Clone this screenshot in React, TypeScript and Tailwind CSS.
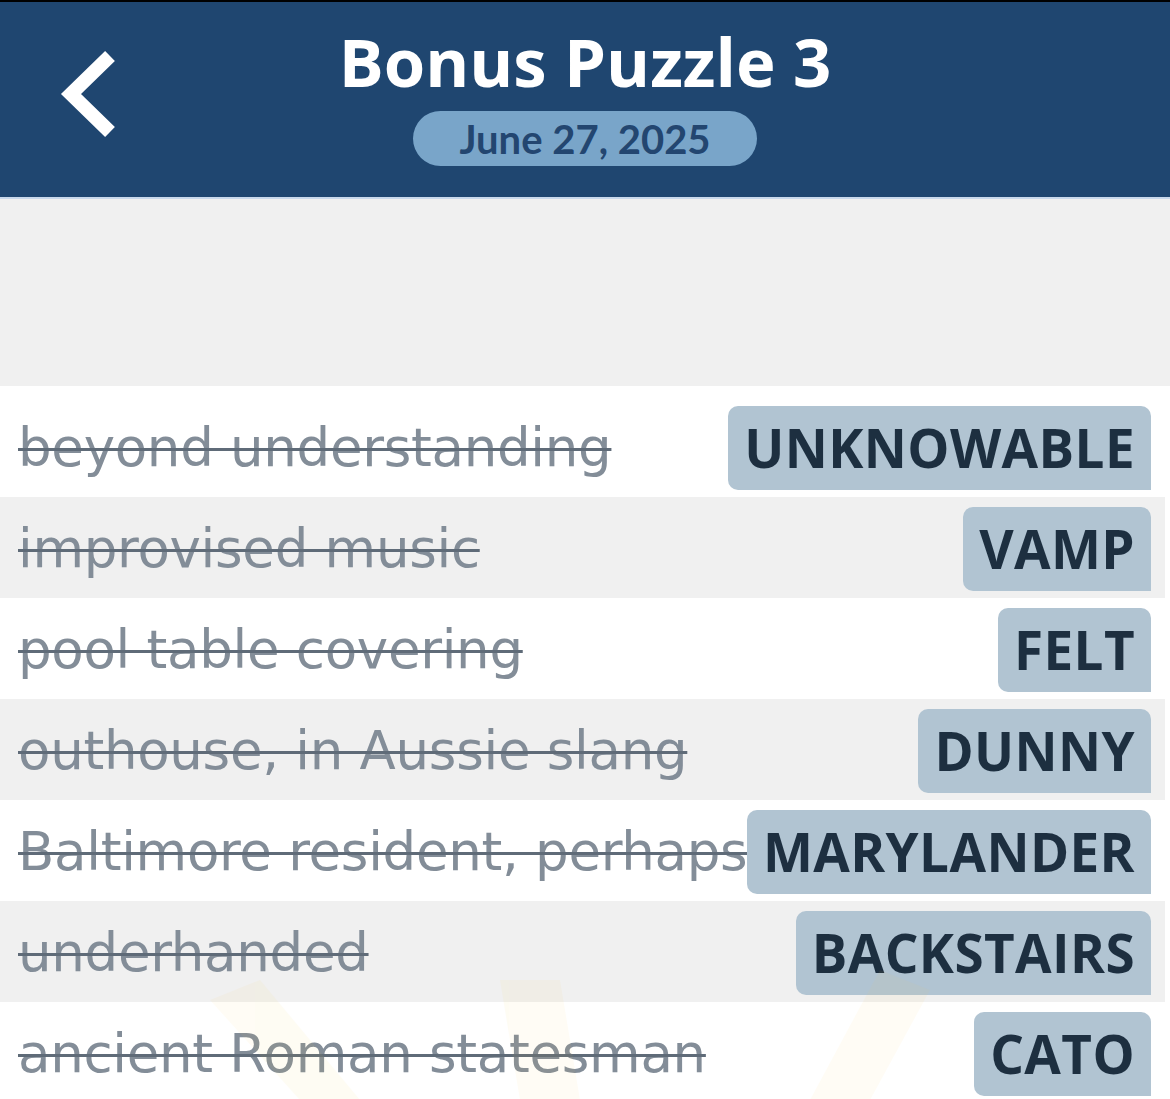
import React from "react";

interface ClueRowProps {
  clue: string;
  answer: string;
  shaded: boolean;
  first?: boolean;
}

const clues = [
  { clue: "beyond understanding", answer: "UNKNOWABLE" },
  { clue: "improvised music", answer: "VAMP" },
  { clue: "pool table covering", answer: "FELT" },
  { clue: "outhouse, in Aussie slang", answer: "DUNNY" },
  { clue: "Baltimore resident, perhaps", answer: "MARYLANDER" },
  { clue: "underhanded", answer: "BACKSTAIRS" },
  { clue: "ancient Roman statesman", answer: "CATO" },
];

function ClueRow({ clue, answer, shaded, first = false }: ClueRowProps) {
  return (
    <div
      className={`mr-[5px] flex items-center justify-between pl-[18px] pr-[14px] ${
        first ? "h-[111px] pt-[12px]" : "h-[101px] pt-[2px]"
      } ${shaded ? "bg-[#f0f0f0]" : "bg-white"}`}
    >
      <span className="min-w-0 whitespace-nowrap font-['DejaVu_Sans',sans-serif] text-[53px] leading-none tracking-[-0.3px] text-[#838d98] line-through decoration-[#5f6b78] decoration-[3px]">
        {clue}
      </span>
      <span className="ml-[6px] flex h-[84px] shrink-0 items-center rounded-[10px] rounded-br-none bg-[#b1c4d2] px-[16px] text-[53px] font-bold leading-none tracking-[0.4px] text-[#1d2f40]">
        {answer}
      </span>
    </div>
  );
}

export default function App() {
  return (
    <div className="relative h-[1099px] w-[1170px] overflow-hidden bg-white font-['Open_Sans',sans-serif]">
      <header className="relative h-[199px] border-t-[2px] border-black bg-[#1f4670]">
        <svg
          className="absolute left-[50px] top-[43px]"
          width="75"
          height="100"
          viewBox="0 0 75 100"
        >
          <polyline
            points="60,11 21,49 60,87"
            fill="none"
            stroke="white"
            strokeWidth="14"
            strokeLinejoin="miter"
          />
        </svg>
        <div className="flex flex-col items-center pt-[26px]">
          <h1 className="text-[67px] font-bold leading-none text-white">Bonus Puzzle 3</h1>
          <div className="mt-[16px] flex h-[55px] w-[344px] items-center justify-center rounded-full bg-[#79a5c9] font-['Lato',sans-serif] text-[40px] font-bold text-[#234670]">
            June 27, 2025
          </div>
        </div>
        <div className="absolute bottom-0 left-0 h-[2px] w-full bg-[#c9d9ec]" />
      </header>

      <div className="h-[187px] bg-[#f0f0f0]" />

      <div className="flex flex-col bg-white">
        {clues.map((c, i) => (
          <ClueRow key={c.answer} clue={c.clue} answer={c.answer} shaded={i % 2 === 1} first={i === 0} />
        ))}
      </div>

      <svg
        className="pointer-events-none absolute left-0 top-[940px]"
        width="1170"
        height="160"
        viewBox="0 0 1170 160"
      >
        <g fill="#fcd34d" opacity="0.06">
          <polygon points="210,60 260,40 360,160 300,160" />
          <polygon points="500,40 560,40 580,160 520,160" />
          <polygon points="880,30 930,50 870,160 810,160" />
        </g>
      </svg>
    </div>
  );
}
